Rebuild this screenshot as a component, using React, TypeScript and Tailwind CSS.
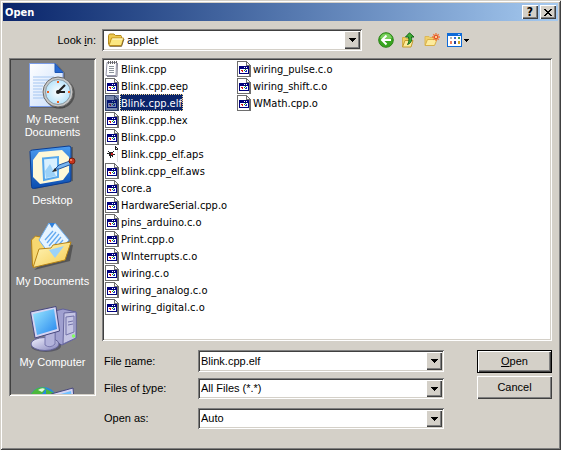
import React, { useState } from "react";

const sunken =
  "shadow-[inset_1px_1px_#808080,inset_-1px_-1px_#fff,inset_2px_2px_#404040,inset_-2px_-2px_#d4d0c8]";
const raised =
  "bg-[#d4d0c8] shadow-[inset_1px_1px_#fff,inset_-1px_-1px_#404040,inset_-2px_-2px_#808080]";
const tahoma = "font-['Tahoma','DejaVu_Sans_Condensed','DejaVu_Sans',sans-serif]";

/* ---------- small icons ---------- */

function FolderIcon() {
  return (
    <svg width="17" height="14" viewBox="0 0 17 14" aria-hidden="true">
      <path d="M.5 11.5v-9l1-1.500h4.500l1.500 1.500H13l.5 1v2" fill="#eec94e" stroke="#b58a1c" />
      <path d="M1 12.5L3.500 5h12l-2 7.500z" fill="#fbe780" stroke="#c2931d" />
      <path d="M4.3 6h10.500" stroke="#fffbdc" />
      <path d="M1.500 13.400h12L16 6" fill="none" stroke="#6a5220" strokeOpacity=".8" />
    </svg>
  );
}

function AppFileIcon() {
  return (
    <svg width="14" height="16" viewBox="0 0 14 16" shapeRendering="crispEdges" aria-hidden="true">
      <path d="M0 0h10v1h1v1h1v1h1v1h1v12H0z" fill="#6e6e6e" />
      <path d="M1 1h8v4h3v10H1z" fill="#fff" />
      <path d="M10 2h1v1h1v1h-2z" fill="#f4f4f4" />
      <path d="M2 5h10v8H2z" fill="#00007b" />
      <path d="M3 8h8v4H3z" fill="#fff" />
      <path d="M7 6h1v1H7zM9 6h1v1H9z" fill="#fff" />
      <path d="M4 9h1v1H4zM5 9h1v2H5z" fill="#d01818" />
      <path d="M7 9h1v1H7zM8 8h1v1H8z" fill="#189018" />
      <path d="M9 9h1v2H9zM8 10h1v1H8z" fill="#1830d0" />
    </svg>
  );
}

function NotepadIcon() {
  return (
    <svg width="14" height="16" viewBox="0 0 14 16" aria-hidden="true">
      <path d="M2 1.500h9.500L11 14.500H1z" fill="#fff" stroke="#9494a8" />
      <path d="M12.500 2L12 15.500H2" fill="none" stroke="#8a8a96" />
      <path d="M3.500 0v3M5.500 0v3M7.500 0v3M9.500 0v3M11.500 0v2" stroke="#666" />
      <path d="M4 5.500h5M4 7.500h5M4 9.500h5M4 11.500h5" stroke="#8c949c" />
    </svg>
  );
}

function BugFileIcon() {
  return (
    <svg width="14" height="16" viewBox="0 0 14 16" shapeRendering="crispEdges" aria-hidden="true">
      <path d="M0 0h10l3 3v13H0z" fill="#fff" />
      <path d="M10 0h1v1h1v1h1v2h-3z" fill="#222" />
      <path d="M11 2h1v1h-1z" fill="#fff" />
      <path d="M12 4h1v12h-1z" fill="#ddd" />
      <path d="M4 6h4v4H4zM3 5h1v1H3zM8 5h1v1H8zM2 7h2v1H2zM8 8h2v1H8zM5 10h1v2H5zM7 10h1v1H7z" fill="#222" />
      <path d="M6 7h2v2H6z" fill="#d21b1b" />
    </svg>
  );
}

function BackIcon() {
  return (
    <svg width="16" height="16" viewBox="0 0 16 16" aria-hidden="true">
      <circle cx="8" cy="8" r="7.300" fill="#38a51f" stroke="#2c8418" />
      <path d="M2 6a6.300 6.300 0 0 1 12 0Q8 9 2 6z" fill="#79cf5c" />
      <path d="M8.500 3.500L4 8l4.500 4.500M4.500 8H13" fill="none" stroke="#fff" strokeWidth="2" />
    </svg>
  );
}

function UpIcon() {
  return (
    <svg width="16" height="16" viewBox="0 0 16 16" aria-hidden="true">
      <path d="M1.500 14.500v-9h3l1 1h3v8z" fill="#f1cf61" stroke="#d6b04a" />
      <path d="M1.500 15L4 8.500h8L10 15z" fill="#fdeb9a" stroke="#c29a2d" />
      <path d="M4.500 5L8.500.8l4.500 4.200h-2.500c.5 4-.5 6.300-4 7.500 1.500-2 1.800-4.500 1-7.500z" fill="#3fae35" stroke="#17671a" />
    </svg>
  );
}

function NewFolderIcon() {
  return (
    <svg width="16" height="16" viewBox="0 0 16 16" aria-hidden="true">
      <path d="M1 13V4.500h4l1 1h5V8" fill="#f1d06a" stroke="#dcb858" />
      <path d="M1 13.500L3.500 7.500h9.500L10.500 13.500z" fill="#fdeb9c" stroke="#d8b048" />
      <path d="M12 1v8M8 5h8M9.300 2.300l5.400 5.400M14.700 2.300L9.300 7.700" stroke="#ef7a3c" strokeWidth="1.300" />
      <circle cx="12" cy="5" r="1.700" fill="#ffd08a" stroke="#e3502c" />
    </svg>
  );
}

function ViewsIcon() {
  return (
    <svg width="23" height="16" viewBox="0 0 23 16" shapeRendering="crispEdges" aria-hidden="true">
      <path d="M0 1h15v14H0z" fill="#0f6bd7" />
      <path d="M1 4h13v10H1z" fill="#fff" />
      <path d="M11 2h2v1h-2z" fill="#a9d0ff" />
      <path d="M3 5h2v2H3z" fill="#b4b4b4" />
      <path d="M7 5h2v2H7z" fill="#3a6fd8" />
      <path d="M11 5h2v2h-2z" fill="#4a9a50" />
      <path d="M3 9h2v3H3z" fill="#ee8060" />
      <path d="M7 9h2v3H7z" fill="#1c3f9c" />
      <path d="M11 9h2v3h-2z" fill="#d0a020" />
      <path d="M17 7h5v1h-1v1h-1v1h-1V9h-1V8h-1z" fill="#000" />
    </svg>
  );
}

function Arrow() {
  return (
    <svg width="7" height="4" viewBox="0 0 7 4" shapeRendering="crispEdges" aria-hidden="true">
      <path d="M0 0h7v1H6v1H5v1H4v1H3V3H2V2H1V1H0z" fill="#000" />
    </svg>
  );
}

/* ---------- places bar icons ---------- */

function RecentIcon() {
  return (
    <svg width="48" height="48" viewBox="0 0 48 48" aria-hidden="true">
      <defs>
        <linearGradient id="page" x1="0" y1="0" x2="1" y2="1">
          <stop offset="0" stopColor="#fff" />
          <stop offset="1" stopColor="#c6dcfb" />
        </linearGradient>
        <radialGradient id="face">
          <stop offset="0" stopColor="#fff" />
          <stop offset="1" stopColor="#b9e4fb" />
        </radialGradient>
      </defs>
      <path d="M2 3h26l8 9v35H2z" fill="#333" opacity=".35" />
      <path d="M.5 2.500H26l8 9v34H.5z" fill="url(#page)" stroke="#7a9ce8" />
      <path d="M26 2.500v9h8z" fill="#2668d0" stroke="#1d56b4" />
      <path d="M4 16h21M4 19h16M4 22h12M4 25h10M4 28h9M4 31h9M4 34h10M4 37h12" stroke="#a5c6f1" />
      <circle cx="30.500" cy="32.500" r="15.300" fill="#333" opacity=".6" />
      <circle cx="29" cy="31" r="15" fill="#c8c8c8" stroke="#6a6a6a" />
      <circle cx="29" cy="31" r="12.500" fill="url(#face)" stroke="#8a98a0" />
      <path d="M29 31l7-7" stroke="#222" strokeWidth="2.200" />
      <path d="M28 31h8" stroke="#222" strokeWidth="2" />
      <circle cx="29" cy="31" r="2" fill="#222" />
      <path d="M28 20h2v2h-2zM28 40h2v2h-2zM18 30h2v2h-2zM39 30h2v2h-2z" fill="#f06020" />
    </svg>
  );
}

function DesktopIcon() {
  return (
    <svg width="48" height="48" viewBox="0 0 48 48" aria-hidden="true">
      <defs>
        <linearGradient id="desk" x1="0" y1="0" x2="0" y2="1">
          <stop offset="0" stopColor="#4c9cf0" />
          <stop offset="1" stopColor="#0b4db0" />
        </linearGradient>
      </defs>
      <path d="M4 9L44 5v34L6 47z" fill="#222" opacity=".4" />
      <path d="M1 9.500Q1.500 8 3.500 8L40 4q2 0 2 2v32q0 2-2 2L4.500 46.500q-2 0-2-2z" fill="url(#desk)" stroke="#0b3d92" />
      <path d="M10 10l23-2 7 7v15l-6 8-23 4-7-7V18z" fill="#fff8d8" />
      <path d="M14 16.500l15-1.500v20l-14 3z" fill="#d8f0ff" stroke="#58a8ec" strokeWidth="2" />
      <path d="M16 29l5-7 6 12-10 2z" fill="#9bd1f8" />
      <path d="M26 27l4-4 11-4 2 3-13 5z" fill="#78b5f0" stroke="#24549a" />
      <path d="M23 30l5-1-2-3z" fill="#222" />
      <circle cx="43" cy="19" r="3" fill="#c8331c" stroke="#74200f" />
      <circle cx="42" cy="18" r="1" fill="#ff9a7a" />
    </svg>
  );
}

function DocumentsIcon() {
  return (
    <svg width="48" height="48" viewBox="0 0 48 48" aria-hidden="true">
      <defs>
        <linearGradient id="fold" x1="0" y1="0" x2="1" y2="1">
          <stop offset="0" stopColor="#fff7be" />
          <stop offset="1" stopColor="#f5cb50" />
        </linearGradient>
      </defs>
      <path d="M5 47l36-9 3-16-6-1z" fill="#222" opacity=".45" />
      <path d="M3.500 43L2.500 17l4-4 5 1 2 4 22 3-4 17z" fill="#f7d770" stroke="#b58317" />
      <path d="M10 17L20 0h6l14 17-12 13-7 2z" fill="#e6f4ff" stroke="#6caef0" />
      <path d="M20 0h6l-3 5z" fill="#2f80dc" />
      <path d="M16 17l8-9M18 20l9-11M20 23l10-12M23 25l9-11M26 26l8-9" stroke="#65aaf0" strokeWidth="1.300" />
      <path d="M4 44.500L10 26l12-1 2-3 18-3-6 18z" fill="url(#fold)" stroke="#b58317" />
      <path d="M20 27l15-4-9 12z" fill="#9bd2fa" />
    </svg>
  );
}

function ComputerIcon() {
  return (
    <svg width="48" height="48" viewBox="0 0 48 48" aria-hidden="true">
      <defs>
        <linearGradient id="scr" x1="0" y1="0" x2="1" y2="1">
          <stop offset="0" stopColor="#9be8ff" />
          <stop offset="1" stopColor="#2586ee" />
        </linearGradient>
        <linearGradient id="metal" x1="0" y1="0" x2="1" y2="1">
          <stop offset="0" stopColor="#f2f2ff" />
          <stop offset="1" stopColor="#8585bc" />
        </linearGradient>
      </defs>
      <path d="M26 7l8-2 13 3v26l-14 7-7-3z" fill="#a0a0d0" stroke="#60609a" />
      <path d="M35 9l12-1v26l-13 6z" fill="#c4c4e4" stroke="#68689e" />
      <path d="M37 13l8-1v16l-8 3zM39 18l5-1M39 21l5-1" fill="none" stroke="#7373aa" />
      <circle cx="44.500" cy="32" r="1.700" fill="#80ff60" />
      <ellipse cx="17" cy="42" rx="15" ry="6" fill="#33334c" opacity=".5" />
      <ellipse cx="16" cy="40" rx="14" ry="6.500" fill="url(#metal)" stroke="#65659a" />
      <path d="M16 31l10-4v13q-5 5-10 1z" fill="#b3b3dc" stroke="#7878ae" />
      <path d="M1.500 8L27 2.500 30.500 27 6 34z" fill="#d4d4f3" stroke="#47477e" />
      <path d="M4 10l21-5 3 20L8 31z" fill="url(#scr)" />
    </svg>
  );
}

function NetworkIcon() {
  return (
    <svg width="48" height="48" viewBox="0 0 48 48" aria-hidden="true">
      <circle cx="14" cy="16" r="14" fill="#2588e0" />
      <path d="M2 9Q8 0 17 3l-3 5-8 5zM17 4l8 4-3 7-5-3z" fill="#4cb83c" />
      <path d="M9 5q4-3 7-1l-3 3z" fill="#e2f8dc" />
      <path d="M22 9l22-6 2 22-22 4z" fill="#d4d4f3" stroke="#47477e" />
      <path d="M25 11l17-5 2 17-18 4z" fill="#6fc0ff" />
    </svg>
  );
}

/* ---------- data ---------- */

const files = [
  "Blink.cpp", "Blink.cpp.eep", "Blink.cpp.elf", "Blink.cpp.hex", "Blink.cpp.o",
  "Blink.cpp_elf.aps", "blink.cpp_elf.aws", "core.a", "HardwareSerial.cpp.o",
  "pins_arduino.c.o", "Print.cpp.o", "WInterrupts.c.o", "wiring.c.o",
  "wiring_analog.c.o", "wiring_digital.c.o", "wiring_pulse.c.o",
  "wiring_shift.c.o", "WMath.cpp.o",
];

const places = [
  { name: "My Recent Documents", icon: <RecentIcon /> },
  { name: "Desktop", icon: <DesktopIcon /> },
  { name: "My Documents", icon: <DocumentsIcon /> },
  { name: "My Computer", icon: <ComputerIcon /> },
];

function fileIcon(name: string) {
  if (name.endsWith(".cpp")) return <NotepadIcon />;
  if (name.endsWith(".aps")) return <BugFileIcon />;
  return <AppFileIcon />;
}

/* ---------- controls ---------- */

function DropDown({ id, value, icon, font = "" }: { id: string; value: string; icon?: React.ReactNode; font?: string }) {
  return (
    <div className={`relative flex h-full items-center bg-white p-0.5 ${sunken}`}>
      {icon && <span className="ml-1 shrink-0">{icon}</span>}
      <select id={id} className={`h-full w-full min-w-0 appearance-none bg-transparent pr-4 outline-none ${icon ? "pl-0.5" : "pl-px"} ${font}`}>
        <option>{value}</option>
      </select>
      <span className={`pointer-events-none absolute inset-y-0.5 right-0.5 flex w-4 items-center justify-center ${raised}`}>
        <Arrow />
      </span>
    </div>
  );
}

export default function App() {
  const [selected, setSelected] = useState("Blink.cpp.elf");

  return (
    <div className="flex min-h-screen w-full flex-col bg-[#d4d0c8] p-[3px] font-['Liberation_Sans',Arial,sans-serif] text-[11px] leading-[13px] text-black shadow-[inset_1px_1px_#d4d0c8,inset_-1px_-1px_#404040,inset_2px_2px_#fff,inset_-2px_-2px_#808080]">
      <header className="flex h-[18px] items-center gap-0.5 bg-linear-to-r from-[#0a246a] to-[#a6caf0] px-0.5">
        <h1 className={`flex-1 font-bold text-white ${tahoma}`}>Open</h1>
        <button aria-label="Help" className={`flex h-[14px] w-4 items-center justify-center text-[12px] font-bold ${raised} ${tahoma}`}>?</button>
        <button aria-label="Close" className={`flex h-[14px] w-4 items-center justify-center ${raised}`}>
          <svg width="8" height="7" viewBox="0 0 8 7" shapeRendering="crispEdges" aria-hidden="true">
            <path d="M0 0h2v1h1v1h2V1h1V0h2v1H7v1H6v1H5v1h1v1h1v1h1v1H6V6H5V5H3v1H2v1H0V6h1V5h1V4h1V3H2V2H1V1H0z" />
          </svg>
        </button>
      </header>

      <main className="flex flex-col gap-[7px] px-1.5 pt-2">
        <div className="flex h-[22px] items-center">
          <label htmlFor="look-in" className="w-[93px] shrink-0 pr-1.5 text-right">
            Look <u>i</u>n:
          </label>
          <div className="h-full flex-1">
            <DropDown id="look-in" value="applet" icon={<FolderIcon />} font={tahoma} />
          </div>
          <div className="flex w-[190px] shrink-0 items-center gap-[7px] pl-4">
            <button aria-label="Back"><BackIcon /></button>
            <button aria-label="Up one level"><UpIcon /></button>
            <button aria-label="New folder"><NewFolderIcon /></button>
            <button aria-label="Views"><ViewsIcon /></button>
          </div>
        </div>

        <div className="flex items-start gap-1.5">
          <nav className={`h-[338px] w-[87px] shrink-0 bg-[#808080] p-0.5 ${sunken}`}>
            <div className="h-full overflow-hidden pt-px">
              {places.map((p) => (
                <button key={p.name} className="flex h-[81px] w-full flex-col items-center gap-1 text-center text-white">
                  <span className="shrink-0">{p.icon}</span>
                  <span className={p.name === "My Recent Documents" ? "w-16" : "whitespace-nowrap"}>{p.name}</span>
                </button>
              ))}
              <button aria-label="My Network Places" className="flex w-full justify-center">
                <NetworkIcon />
              </button>
            </div>
          </nav>

          <div className="flex min-w-0 flex-1 flex-col gap-[9px]">
            <ul className={`grid h-[283px] auto-cols-[132px] grid-flow-col grid-rows-[repeat(15,17px)] bg-white p-0.5 ${sunken} ${tahoma}`}>
              {files.map((f) => (
                <li key={f}>
                  <button onClick={() => setSelected(f)} className="flex h-[17px] items-center gap-px pl-px">
                    <span className={`relative ${f === selected ? "after:absolute after:inset-0 after:bg-[#0a246a]/55" : ""}`}>{fileIcon(f)}</span>
                    <span className={`h-[17px] border border-dotted leading-[17px] ${f === selected ? "border-[#f5db95] bg-[#0a246a] text-white" : "border-transparent"}`}>{f}</span>
                  </button>
                </li>
              ))}
            </ul>

            <div className="flex items-start gap-[33px] pl-0.5">
              <form className="grid min-w-0 flex-1 grid-cols-[94px_1fr] items-center">
                <label htmlFor="file-name">File <u>n</u>ame:</label>
                <div className={`flex h-[22px] bg-white p-0.5 ${sunken}`}>
                  <input id="file-name" value={selected} onChange={(e) => setSelected(e.target.value)} className="min-w-0 flex-1 bg-transparent pl-px outline-none" />
                  <button type="button" aria-label="Show file names" className={`flex w-4 items-center justify-center ${raised}`}>
                    <Arrow />
                  </button>
                </div>
                <label htmlFor="file-type" className="mt-1.5">Files of <u>t</u>ype:</label>
                <div className="mt-1.5 h-[21px]"><DropDown id="file-type" value="All Files (*.*)" /></div>
                <label htmlFor="open-as" className="mt-[9px]">Open as:</label>
                <div className="mt-[9px] h-[21px]"><DropDown id="open-as" value="Auto" /></div>
              </form>
              <div className="flex w-[75px] shrink-0 flex-col gap-[3px]">
                <button className="h-[23px] border border-black bg-[#d4d0c8] shadow-[inset_1px_1px_#fff,inset_-1px_-1px_#404040,inset_-2px_-2px_#808080]">
                  <u>O</u>pen
                </button>
                <button className={`h-[23px] ${raised}`}>Cancel</button>
              </div>
            </div>
          </div>
        </div>
      </main>
    </div>
  );
}
